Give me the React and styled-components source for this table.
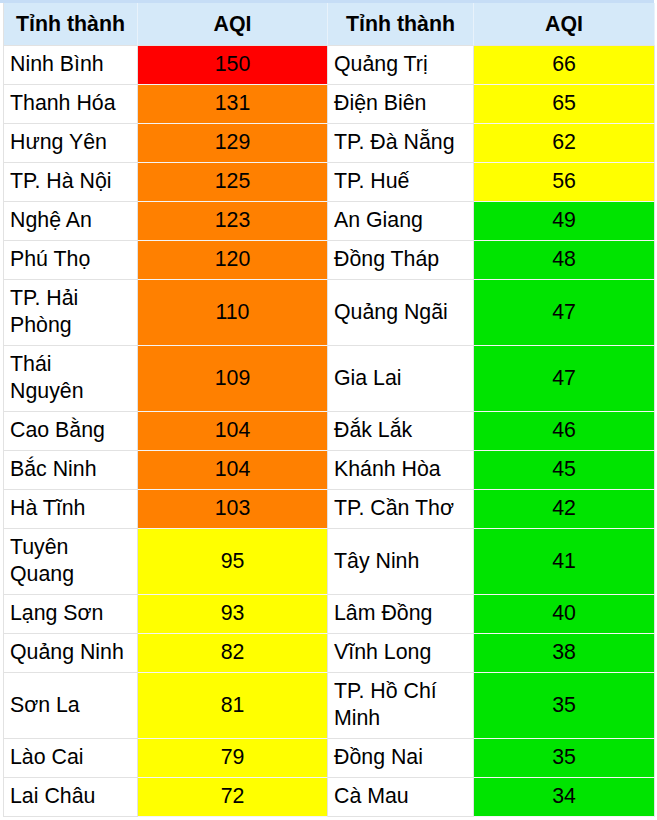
import React from 'react';
import styled, { createGlobalStyle } from 'styled-components';

const GlobalStyle = createGlobalStyle`
  body {
    margin: 0;
    background: #ffffff;
    font-family: "Liberation Sans", Arial, sans-serif;
  }
`;

// === MÀU THEO MỨC AQI ===
const aqiColor = (v) => {
  if (v > 150) return '#8f3f97';
  if (v >= 150) return '#ff0000';
  if (v > 100) return '#ff8000';
  if (v > 50) return '#ffff00';
  return '#00e400';
};

const Wrapper = styled.div`
  width: 654px;
  border-top: 3px solid #c6ddf6;
`;

const Table = styled.table`
  margin-left: 3px;
  width: 652px;
  table-layout: fixed;
  border-collapse: separate;
  border-spacing: 0;
  border-left: 1px solid #e2e2e2;
  font-size: 21.33px;
  line-height: 27px;
  color: #000;
`;

const HeadCell = styled.th`
  box-sizing: border-box;
  width: ${(p) => p.$w}px;
  background: #d5e9f9;
  font-weight: bold;
  text-align: center;
  padding: 8px 6px 7px;
  border-right: 1px solid #e8f2fb;
  border-bottom: 1px solid #e2e2e2;
`;

const NameCell = styled.td`
  padding: 5px 9px 6px 6px;
  background: #fff;
  border-right: 1px solid #e2e2e2;
  border-bottom: 1px solid #e2e2e2;
  vertical-align: middle;
`;

const AqiCell = styled.td`
  padding: 5px 6px 6px;
  text-align: center;
  background: ${(p) => p.$bg};
  border-right: 1px solid #e2e2e2;
  border-bottom: 1px solid #f4f4f4;
  vertical-align: middle;
`;

const rows = [
  ['Ninh Bình', 150, 'Quảng Trị', 66],
  ['Thanh Hóa', 131, 'Điện Biên', 65],
  ['Hưng Yên', 129, 'TP. Đà Nẵng', 62],
  ['TP. Hà Nội', 125, 'TP. Huế', 56],
  ['Nghệ An', 123, 'An Giang', 49],
  ['Phú Thọ', 120, 'Đồng Tháp', 48],
  ['TP. Hải Phòng', 110, 'Quảng Ngãi', 47],
  ['Thái Nguyên', 109, 'Gia Lai', 47],
  ['Cao Bằng', 104, 'Đắk Lắk', 46],
  ['Bắc Ninh', 104, 'Khánh Hòa', 45],
  ['Hà Tĩnh', 103, 'TP. Cần Thơ', 42],
  ['Tuyên Quang', 95, 'Tây Ninh', 41],
  ['Lạng Sơn', 93, 'Lâm Đồng', 40],
  ['Quảng Ninh', 82, 'Vĩnh Long', 38],
  ['Sơn La', 81, 'TP. Hồ Chí Minh', 35],
  ['Lào Cai', 79, 'Đồng Nai', 35],
  ['Lai Châu', 72, 'Cà Mau', 34],
];

export default function App() {
  return (
    <Wrapper>
      <GlobalStyle />
      <Table>
        <thead>
          <tr>
            <HeadCell $w={134}>Tỉnh thành</HeadCell>
            <HeadCell $w={190}>AQI</HeadCell>
            <HeadCell $w={146}>Tỉnh thành</HeadCell>
            <HeadCell $w={181}>AQI</HeadCell>
          </tr>
        </thead>
        <tbody>
          {rows.map(([a, av, b, bv]) => (
            <tr key={a}>
              <NameCell>{a}</NameCell>
              <AqiCell $bg={aqiColor(av)}>{av}</AqiCell>
              <NameCell>{b}</NameCell>
              <AqiCell $bg={aqiColor(bv)}>{bv}</AqiCell>
            </tr>
          ))}
        </tbody>
      </Table>
    </Wrapper>
  );
}
